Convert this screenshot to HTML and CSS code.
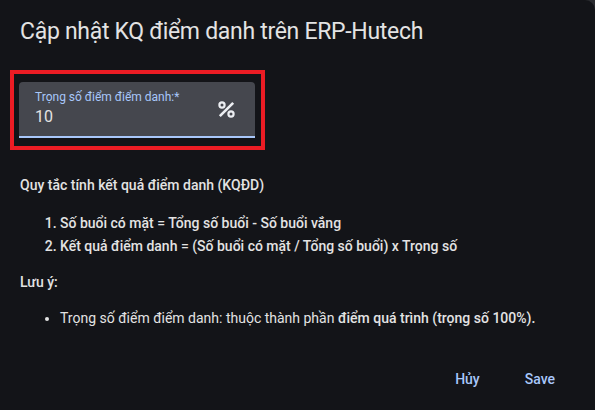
FILE: index.html
```html
<!DOCTYPE html>
<html lang="vi">
<head>
    <meta charset="UTF-8">
    <meta name="viewport" content="width=device-width, initial-scale=1.0">
    <title>Cập nhật KQ điểm danh</title>
    <link rel="stylesheet" href="styles.css">
</head>
<body>
    <div class="dialog">
        <h2 class="title">Cập nhật KQ điểm danh trên ERP-Hutech</h2>
        <div class="highlight">
            <div class="field">
                <div class="field-text">
                    <label for="weight">Trọng số điểm điểm danh:*</label>
                    <input type="text" id="weight" value="10">
                </div>
                <svg class="percent" viewBox="0 0 17 17" width="17" height="17">
                    <circle cx="4" cy="4" r="2.6"/>
                    <circle cx="13" cy="13" r="2.6"/>
                    <line x1="15.2" y1="1.8" x2="1.8" y2="15.2"/>
                </svg>
            </div>
        </div>
        <p class="heading rules-title">Quy tắc tính kết quả điểm danh (KQĐD)</p>
        <ol class="rules">
            <li>Số buổi có mặt = Tổng số buổi - Số buổi vắng</li>
            <li>Kết quả điểm danh = (Số buổi có mặt / Tổng số buổi) x Trọng số</li>
        </ol>
        <p class="heading">Lưu ý:</p>
        <ul class="notes">
            <li>Trọng số điểm điểm danh: thuộc thành phần <strong>điểm quá trình (trọng số 100%).</strong></li>
        </ul>
        <div class="actions">
            <button>Hủy</button>
            <button>Save</button>
        </div>
    </div>
</body>
</html>
```

FILE: styles.css
```css
body {
    margin: 0;
    background-color: #2b2c30;
    font-family: Roboto, "Liberation Sans", sans-serif;
}
.dialog {
    box-sizing: border-box;
    width: 595px;
    height: 410px;
    padding: 16px 0 0 20px;
    background-color: #131418;
    border-top-right-radius: 10px;
    color: #e3e3e3;
}
.title {
    margin: 0;
    font-size: 23px;
    font-weight: 400;
    line-height: 32px;
    letter-spacing: -0.3px;
}
.highlight {
    width: 237px;
    margin: 22px 0 0 -10px;
    padding: 8px 5px 8px 5px;
    border: 4px solid #ec1c24;
}
.field {
    display: flex;
    align-items: center;
    width: 236px;
    height: 54px;
    box-sizing: content-box;
    background-color: #45474e;
    border-radius: 4px 4px 0 0;
    border-bottom: 2px solid #a8c7fa;
}
.field-text {
    flex: 1;
    padding: 7px 0 0 16px;
    align-self: flex-start;
}
.field-text label {
    display: block;
    font-size: 12px;
    line-height: 16px;
    color: #a8c7fa;
}
.field-text input {
    display: block;
    width: 150px;
    margin: 0;
    padding: 0;
    border: none;
    outline: none;
    background: transparent;
    color: #e3e3e3;
    font-family: inherit;
    font-size: 16px;
    line-height: 24px;
    height: 24px;
}
.percent {
    fill: none;
    stroke: #eceef2;
    stroke-width: 2.2;
    margin-right: 20px;
    margin-top: 1px;
}
.percent line {
    stroke-width: 2.6;
}
.heading {
    margin: 14px 0 0 0;
    font-size: 14px;
    font-weight: 500;
    line-height: 20px;
}
.rules-title {
    margin-top: 25px;
}
.rules, .notes {
    padding-left: 40px;
    font-size: 14px;
    line-height: 23px;
}
.rules {
    margin: 17px 0 0 0;
    font-weight: 500;
}
.notes {
    margin: 16px 0 0 0;
    line-height: 20px;
}
.notes strong {
    font-weight: 500;
}
.actions {
    display: flex;
    justify-content: flex-end;
    gap: 13px;
    margin-top: 31px;
    padding-right: 24px;
}
.actions button {
    height: 40px;
    padding: 0 16px;
    border: none;
    border-radius: 20px;
    background: transparent;
    color: #a8c7fa;
    font-family: inherit;
    font-size: 14px;
    font-weight: 500;
    cursor: pointer;
}
```
